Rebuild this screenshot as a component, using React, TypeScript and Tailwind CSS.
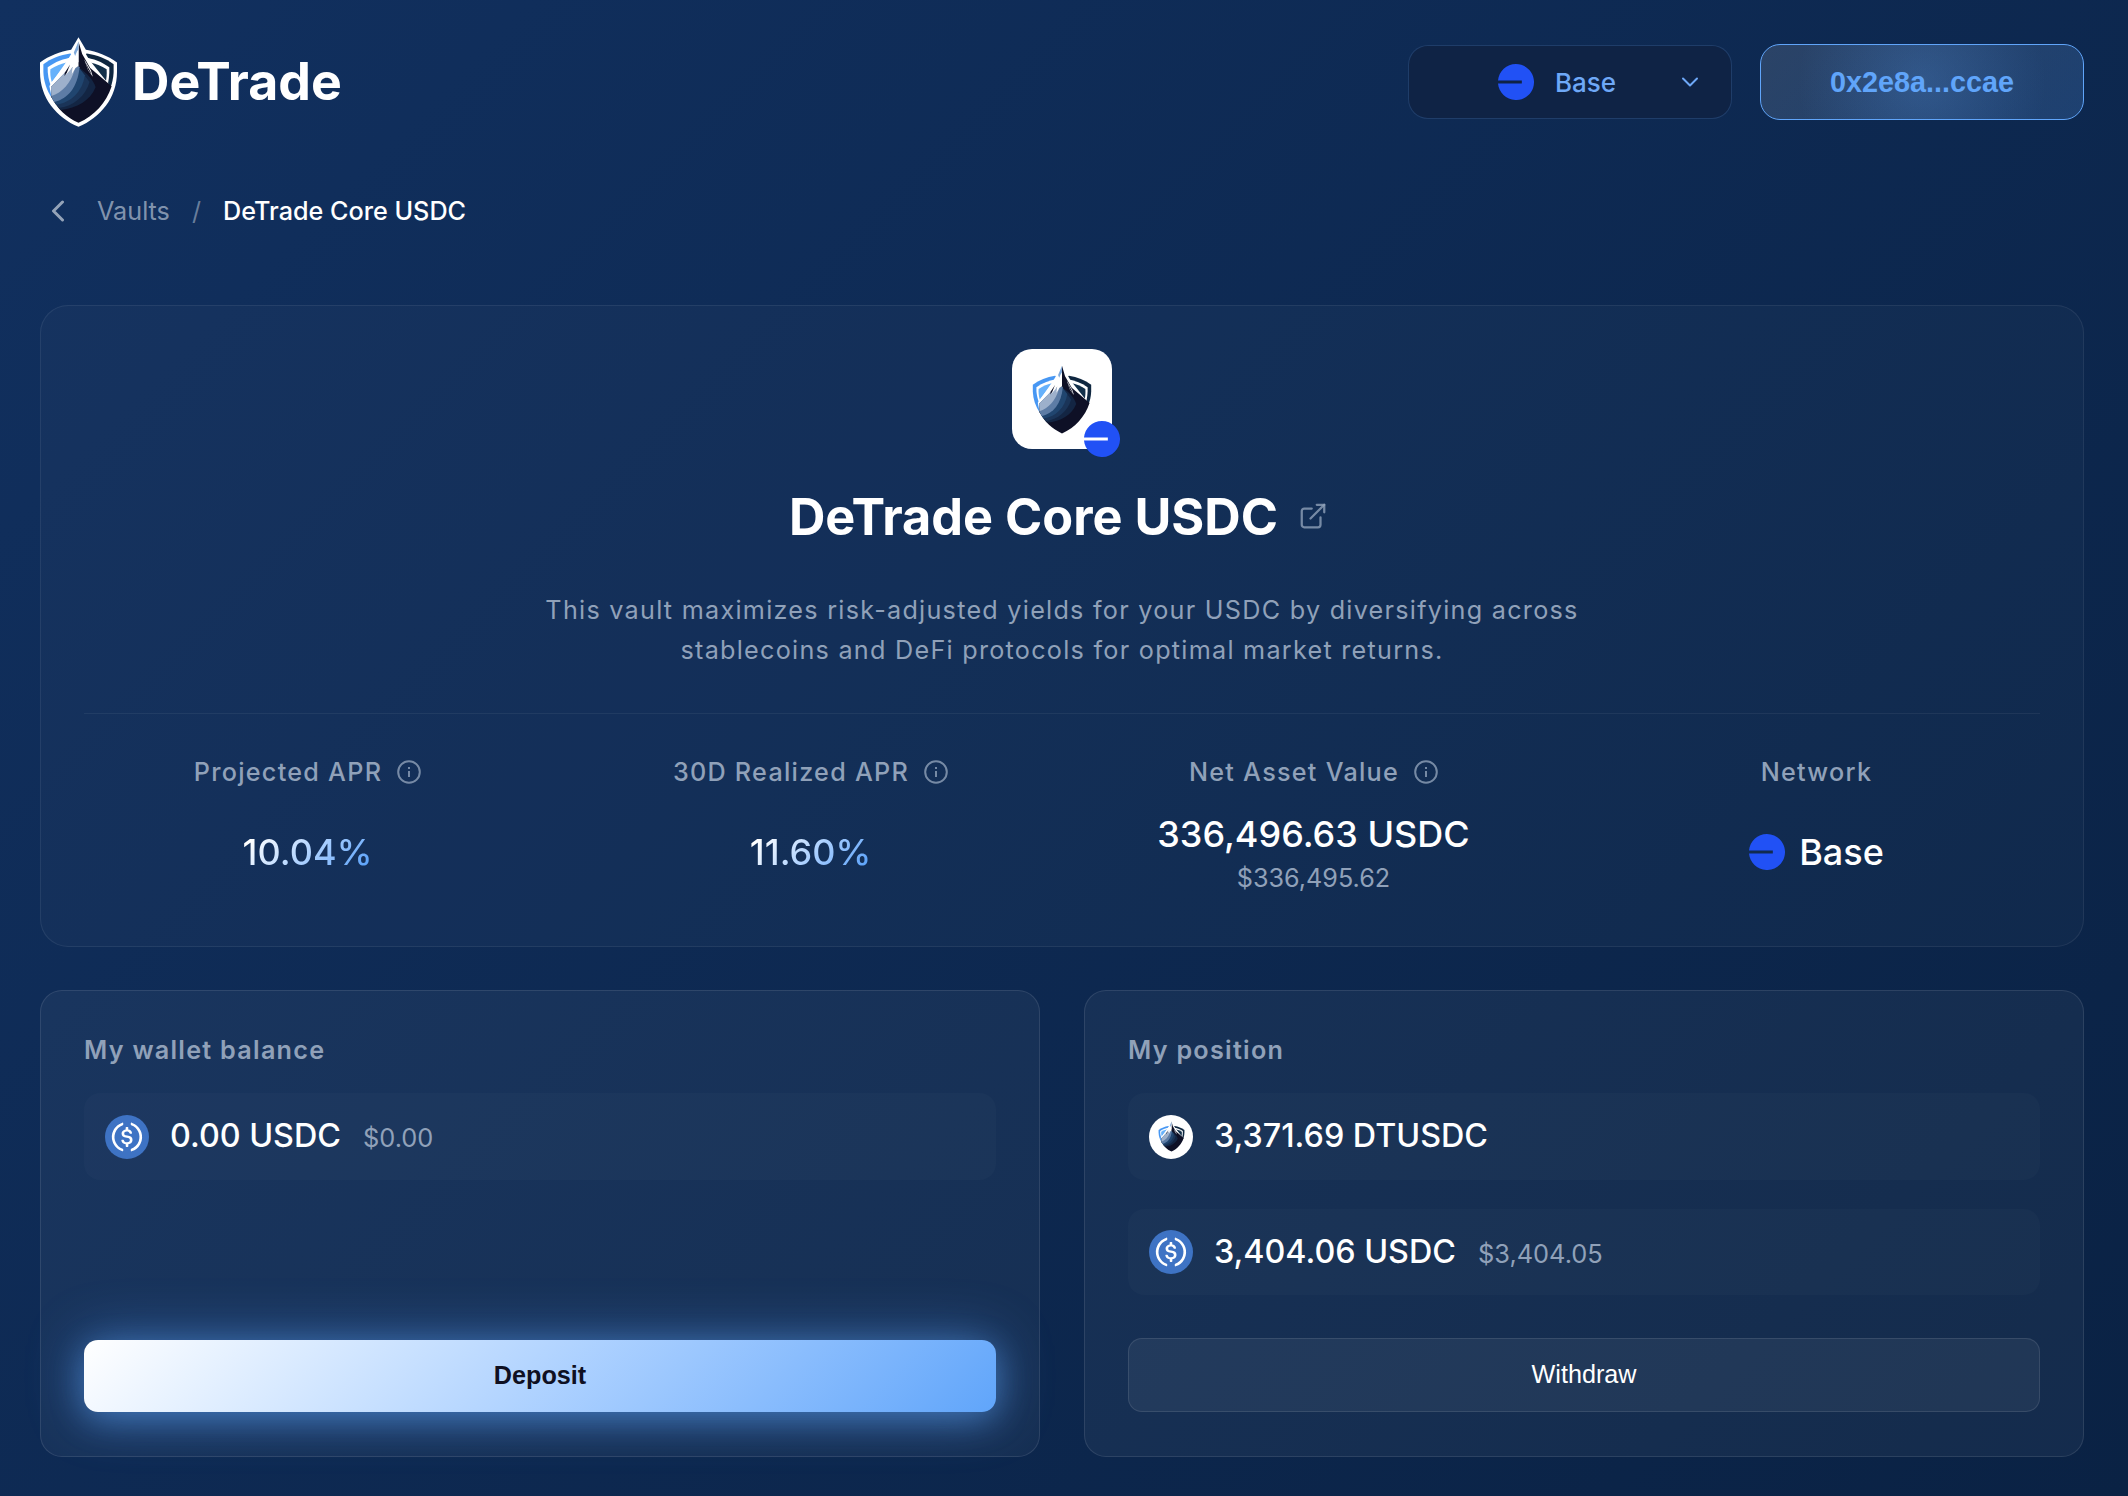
import type { ReactNode } from "react";

function ShieldLogo({ className }: { className?: string }) {
  return (
    <svg viewBox="0 0 230 268" className={className} fill="none">
      <path
        d="M115 0 L93 38 C60 44 28 55 0 76 V104 C0 182 50 240 115 268 C180 240 230 182 230 104 V76 C202 55 170 44 137 38 Z"
        fill="#fff"
      />
      <path d="M90 49 C60 54 33 64 10 81 V104 C11 132 20 158 34 180 L115 60 Z" fill="#4797f3" />
      <path d="M140 49 C170 54 197 64 220 81 V104 C219 122 216 138 209 154 L115 60 Z" fill="#0f2740" />
      <path d="M97 60 C72 64 44 74 23 90 C22 110 26 130 34 150 Z" fill="#fff" />
      <path d="M133 60 C158 64 186 74 207 90 C208 112 205 132 200 152 Z" fill="#fff" />
      <path d="M82 75 C64 79 46 86 31 96 C30 108 31 120 35 134 Z" fill="#66b1fb" />
      <path d="M148 75 C166 79 184 86 199 96 C200 110 199 122 196 136 Z" fill="#12304a" />
      <path d="M115 12 L84 66 L28 146 L36 186 L60 180 L115 80 L200 160 L205 140 L146 66 Z" fill="#fff" />
      <path
        d="M115 13 L126 50 L150 92 L214 147 C198 196 162 236 115 256 C80 240 52 214 35 180 L33 152 L72 112 L115 74 Z"
        fill="#0e1026"
      />
      <path d="M115 90 L82 100 L33 150 L35 180 L62 218 C110 212 150 190 166 150 C160 128 140 108 115 90 Z" fill="#132543" />
      <path d="M115 90 L82 100 L33 150 L35 180 L56 212 C100 206 136 176 148 134 Z" fill="#1a3458" />
      <path d="M115 90 L82 100 L33 150 L36 182 L48 202 C92 196 126 164 134 114 Z" fill="#20456f" />
      <path d="M115 86 L82 100 L33 150 L35 180 L42 194 C84 184 112 150 118 90 Z" fill="#5d7ca5" />
      <path d="M108 84 L80 100 L33 148 L34 176 C66 166 92 138 104 96 Z" fill="#9db0cb" />
      <path d="M115 14 L88 66 L66 100 L86 88 L76 114 L92 96 L98 84 L95 110 L106 92 L115 86 Z" fill="#fff" />
      <path d="M115 13 L101 46 L105 56 L110 44 L115 36 Z" fill="#7fa9da" />
      <path d="M90 82 L74 106 L73 116 L80 106 Z" fill="#0e1026" />
      <path d="M132 66 L152 100 L158 118 L144 100 Z" fill="#fff" />
      <path d="M135 74 L150 102 L154 112 L144 98 Z" fill="#0e1026" />
    </svg>
  );
}

function BaseMark({ className }: { className?: string }) {
  return (
    <svg viewBox="0 0 110 110" className={className}>
      <path
        fill="#2151f5"
        d="M54.921 110.034C85.359 110.034 110.034 85.402 110.034 55.017C110.034 24.6319 85.359 0 54.921 0C26.0432 0 2.35281 22.1714 0 50.3923H72.8467V59.6416H0C2.35281 87.8625 26.0432 110.034 54.921 110.034Z"
      />
    </svg>
  );
}

function UsdcMark({ className }: { className?: string }) {
  return (
    <svg viewBox="0 0 32 32" className={className}>
      <circle cx="16" cy="16" r="16" fill="#3e73c4" />
      <path
        fill="#fff"
        d="M20.022 18.124c0-2.124-1.28-2.852-3.84-3.156-1.828-.243-2.193-.728-2.193-1.578 0-.85.61-1.396 1.828-1.396 1.097 0 1.707.364 2.011 1.275a.458.458 0 00.427.303h.975a.416.416 0 00.427-.425v-.06a3.04 3.04 0 00-2.743-2.489V9.142c0-.243-.183-.425-.487-.486h-.915c-.243 0-.426.182-.487.486v1.396c-1.829.242-2.986 1.456-2.986 2.974 0 2.002 1.218 2.791 3.778 3.095 1.707.303 2.255.668 2.255 1.639 0 .97-.853 1.638-2.011 1.638-1.585 0-2.133-.667-2.316-1.578-.06-.242-.244-.364-.427-.364h-1.036a.416.416 0 00-.426.425v.06c.243 1.518 1.219 2.61 3.23 2.914v1.457c0 .242.183.425.487.485h.915c.243 0 .426-.182.487-.485V21.34c1.829-.303 3.047-1.578 3.047-3.217z"
      />
      <path
        fill="#fff"
        d="M12.892 24.497c-4.754-1.7-7.192-6.98-5.424-11.653.914-2.55 2.925-4.491 5.424-5.402.244-.121.365-.303.365-.607v-.85c0-.242-.121-.424-.365-.485-.061 0-.183 0-.244.06a10.895 10.895 0 00-7.13 13.717c1.096 3.4 3.717 6.01 7.13 7.102.244.121.488 0 .548-.243.061-.06.061-.122.061-.243v-.85c0-.182-.182-.424-.365-.546zm6.46-18.936c-.244-.122-.488 0-.548.242-.061.061-.061.122-.061.243v.85c0 .243.182.485.365.607 4.754 1.7 7.192 6.98 5.424 11.653-.914 2.55-2.925 4.491-5.424 5.402-.244.121-.365.303-.365.607v.85c0 .242.121.424.365.485.061 0 .183 0 .244-.06a10.895 10.895 0 007.13-13.717c-1.096-3.46-3.778-6.07-7.13-7.162z"
      />
    </svg>
  );
}

function InfoIcon() {
  return (
    <svg viewBox="0 0 24 24" className="size-6 text-slate-400/80" fill="none" stroke="currentColor" strokeWidth="2">
      <circle cx="12" cy="12" r="10.8" />
      <path d="M12 11v6" />
      <path d="M12 7v2" />
    </svg>
  );
}

function Stat({ label, info, children }: { label: string; info?: boolean; children: ReactNode }) {
  return (
    <div className="flex flex-col items-center">
      <div className="flex h-8 items-center gap-[15px] text-[25.2px] font-medium tracking-[1.26px] text-slate-400">
        <span className="pt-0.5">{label}</span>
        {info && <InfoIcon />}
      </div>
      <div className="mt-[14px] flex h-[100px] flex-col items-center justify-center text-[36px] leading-[44px] font-medium text-white">
        {children}
      </div>
    </div>
  );
}

function TokenRow({ icon, amount, usd, className }: { icon: ReactNode; amount: string; usd?: string; className: string }) {
  return (
    <div className={`flex items-center rounded-2xl bg-white/[0.02] pl-[21px] ${className}`}>
      {icon}
      <div className="ml-[21px] flex items-baseline gap-[22px]">
        <span className="text-[32.3px] font-medium text-white">{amount}</span>
        {usd && <span className="text-[25.4px] text-slate-400">{usd}</span>}
      </div>
    </div>
  );
}

const panel = "flex h-[467px] flex-col rounded-[22px] border border-white/10 bg-white/[0.042] px-[43px]";
const gradientText = "bg-linear-135 from-white from-10% to-[#60a5fa] to-90% bg-clip-text text-transparent";

export default function App() {
  return (
    <div className="h-[1496px] w-[2128px] overflow-hidden bg-linear-[135deg,#11305f,#0a2244] pr-[44px] pl-10 font-['Inter',sans-serif]">
      <header className="flex h-[164px] items-center justify-between">
        <div className="flex items-center gap-[15px]">
          <ShieldLogo className="h-[90px] w-[77px]" />
          <span className="text-[51.8px] leading-none font-bold text-white">DeTrade</span>
        </div>
        <div className="flex items-center gap-7">
          <button className="flex h-[74px] w-[324px] items-center rounded-[20px] border border-[#60a5fa]/20 bg-[#0f2345] pl-[89px]">
            <BaseMark className="size-9" />
            <span className="ml-[21px] text-[26px] font-medium text-[#6ea8f7]">Base</span>
            <svg viewBox="0 0 18 12" className="ml-[65px] h-3 w-[18px]" fill="none" stroke="#6ea8f7" strokeWidth="2" strokeLinecap="round" strokeLinejoin="round">
              <path d="M2 2.5 L9 9.5 L16 2.5" />
            </svg>
          </button>
          <button className="h-[76px] w-[324px] rounded-[20px] border border-[#60a5fa] bg-[radial-gradient(circle_at_center,rgba(96,165,250,0.22),transparent_75%),linear-gradient(135deg,rgba(255,255,255,0.12),rgba(96,165,250,0.2))] pt-0.5 font-['Liberation_Sans',sans-serif] text-[28.8px] font-bold text-[#60a5fa]">
            0x2e8a...ccae
          </button>
        </div>
      </header>

      <nav className="flex h-[94px] items-center pl-[11px] text-[25.2px]">
        <svg viewBox="0 0 14 22" className="h-[22px] w-[14px]" fill="none" stroke="#94a3b8" strokeWidth="3" strokeLinecap="round" strokeLinejoin="round">
          <path d="M11.500 2 L2.500 11 L11.500 20" />
        </svg>
        <span className="ml-8 pt-0.5 text-slate-400/90">Vaults</span>
        <span className="ml-[22px] pt-0.5 text-slate-400/70">/</span>
        <span className="ml-[22px] pt-0.5 font-medium text-white">DeTrade Core USDC</span>
      </nav>

      <section className="mt-[47px] h-[642px] rounded-[28px] border border-white/[0.07] bg-white/[0.022] px-[43px]">
        <div className="flex h-[408px] flex-col items-center border-b border-white/[0.06] pt-[43px]">
          <div className="relative flex size-[100px] items-center justify-center rounded-[20px] bg-white">
            <ShieldLogo className="h-[75px] w-[64px]" />
            <BaseMark className="absolute -right-2 -bottom-2 size-9" />
          </div>
          <div className="mt-[36px] mr-[7px] flex h-16 items-center gap-[20px]">
            <h1 className="text-[50.4px] leading-none font-bold text-white">DeTrade Core USDC</h1>
            <svg viewBox="0 0 24 24" className="mb-0.5 size-[30px] text-slate-400/80" fill="none" stroke="currentColor" strokeWidth="1.8" strokeLinecap="round" strokeLinejoin="round">
              <path d="M18 13v6a2 2 0 0 1-2 2H5a2 2 0 0 1-2-2V8a2 2 0 0 1 2-2h6" />
              <path d="M15 3h6v6" />
              <path d="M10 14 21 3" />
            </svg>
          </div>
          <p className="mt-[41px] w-[1100px] text-center text-[25.2px] leading-10 tracking-[1.26px] text-slate-400">
            This vault maximizes risk-adjusted yields for your USDC by diversifying across
            <br />
            stablecoins and DeFi protocols for optimal market returns.
          </p>
        </div>
        <div className="grid grid-cols-4 gap-14 pt-[42px]">
          <Stat label="Projected APR" info>
            <span className={gradientText}>10.04%</span>
          </Stat>
          <Stat label="30D Realized APR" info>
            <span className={gradientText}>11.60%</span>
          </Stat>
          <Stat label="Net Asset Value" info>
            <span className="pt-[7px]">336,496.63 USDC</span>
            <span className="text-[25.2px] leading-[44px] font-normal text-slate-400">$336,495.62</span>
          </Stat>
          <Stat label="Network">
            <span className="flex items-center gap-[14px]">
              <BaseMark className="size-9" />
              Base
            </span>
          </Stat>
        </div>
      </section>

      <div className="mt-[43px] grid grid-cols-2 gap-11">
        <section className={panel}>
          <h2 className="mt-[43px] h-8 text-[25.2px] leading-8 font-semibold tracking-[1.26px] text-slate-400">My wallet balance</h2>
          <TokenRow className="mt-[27px] h-[87px]" icon={<UsdcMark className="size-11" />} amount="0.00 USDC" usd="$0.00" />
          <button className="mt-[160px] h-[72px] rounded-[14px] bg-linear-135 from-white to-[#60a5fa] font-['Liberation_Sans',sans-serif] text-[25.2px] font-bold text-[#0f1022] shadow-[0_0_56px_rgba(96,165,250,0.45),0_8px_32px_rgba(96,165,250,0.4)]">
            Deposit
          </button>
        </section>
        <section className={panel}>
          <h2 className="mt-[43px] h-8 text-[25.2px] leading-8 font-semibold tracking-[1.26px] text-slate-400">My position</h2>
          <TokenRow
            className="mt-[27px] h-[87px]"
            icon={
              <span className="flex size-11 items-center justify-center rounded-full bg-white">
                <ShieldLogo className="h-[33px] w-[29px]" />
              </span>
            }
            amount="3,371.69 DTUSDC"
          />
          <TokenRow className="mt-[29px] h-[86px]" icon={<UsdcMark className="size-11" />} amount="3,404.06 USDC" usd="$3,404.05" />
          <button className="mt-[43px] h-[74px] rounded-[14px] border border-white/10 bg-white/[0.055] font-['Liberation_Sans',sans-serif] text-[25.2px] text-white">
            Withdraw
          </button>
        </section>
      </div>
    </div>
  );
}
